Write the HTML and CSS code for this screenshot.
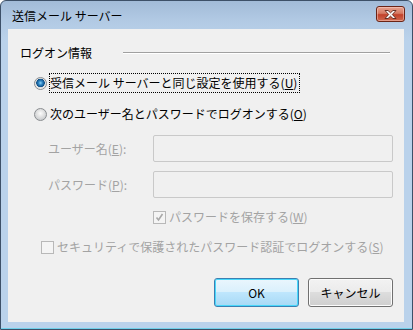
FILE: index.html
```html
<!DOCTYPE html>
<html>
<head>
<meta charset="utf-8">
<title>送信メール サーバー</title>
<link rel="stylesheet" href="styles.css">
</head>
<body>
<div class="window">
  <div class="titlebar">
    <span class="title">送信メール サーバー</span>
    <span class="close">
      <svg width="15" height="11" viewBox="0 0 15 11">
        <path d="M2 1.5 L5 1.5 L7.5 3.8 L10 1.5 L13 1.5 L9.3 5.5 L13 9.5 L10 9.5 L7.5 7.2 L5 9.5 L2 9.5 L5.7 5.5 Z" fill="#fff" stroke="#5a2418" stroke-width="0.9" stroke-linejoin="round"/>
      </svg>
    </span>
  </div>
  <div class="client">
    <div class="group_head">
      <span>ログオン情報</span>
      <span class="rule"></span>
    </div>

    <div class="opt first">
      <span class="radio on"></span>
      <span class="lbl focus">受信メール サーバーと同じ設定を使用する(<u>U</u>)</span>
    </div>
    <div class="opt second">
      <span class="radio"></span>
      <span class="lbl">次のユーザー名とパスワードでログオンする(<u>O</u>)</span>
    </div>

    <div class="field user">
      <span class="field_lbl">ユーザー名(<u>E</u>):</span>
      <span class="txt"></span>
    </div>
    <div class="field pass">
      <span class="field_lbl">パスワード(<u>P</u>):</span>
      <span class="txt"></span>
    </div>

    <div class="chk_row save">
      <span class="chk">
        <svg width="11" height="11" viewBox="0 0 11 11"><path d="M2.5 5.5 L4.5 8 L8.5 2" fill="none" stroke="#a8a8a8" stroke-width="1.6"/></svg>
      </span>
      <span class="lbl dis">パスワードを保存する(<u>W</u>)</span>
    </div>
    <div class="chk_row spa">
      <span class="chk"></span>
      <span class="lbl dis">セキュリティで保護されたパスワード認証でログオンする(<u>S</u>)</span>
    </div>

    <div class="buttons">
      <span class="btn ok">OK</span>
      <span class="btn">キャンセル</span>
    </div>
  </div>
</div>
</body>
</html>
```

FILE: styles.css
```css
body {
margin:0;
background:#fff;
font-family:"Noto Sans CJK JP", "Noto Sans", sans-serif;
font-size:12px;
color:#000;
}

.window {
width:413px;
height:330px;
box-sizing:border-box;
border:1px solid #3d5068;
border-radius:6px 6px 0 0;
background:linear-gradient(#a2bbd8 0px, #b2cae4 20px, #bad2eb 40px, #bad2eb 100%);
box-shadow:inset 0 -1px 0 #6fd0ea;
padding:0 8px 7px 7px;
display:flex;
flex-direction:column;
}

.titlebar {
height:28px;
display:flex;
align-items:center;
justify-content:space-between;
padding:0 0 0 4px;
}

.title {
line-height:16px;
margin-top:1px;
color:#000;
}

.close {
width:27px;
height:14px;
margin-top:-2px;
margin-right:-1px;
border:1px solid #6b2416;
border-radius:3px;
background:linear-gradient(#e7a28f 0%, #d67a63 45%, #c2412a 55%, #cf6a50 100%);
box-shadow:inset 0 0 0 1px rgba(255,220,210,0.45);
display:flex;
align-items:center;
justify-content:center;
}

.close svg { display:block; }

.client {
flex:1;
background:#f0f0f0;
padding:16px 0 0 12px;
display:flex;
flex-direction:column;
}

.group_head {
display:flex;
align-items:center;
line-height:16px;
height:16px;
padding-right:14px;
}

.group_head .rule {
flex:1;
height:1px;
margin-left:31px;
margin-top:-1px;
background:#a0a0a0;
box-shadow:0 1px 0 #fff;
}

.opt {
display:flex;
align-items:center;
height:20px;
margin-left:14px;
}

.opt.first { margin-top:12px; }
.opt.second { margin-top:11px; }

.radio {
width:13px;
height:13px;
box-sizing:border-box;
border-radius:50%;
border:1px solid #8a8d90;
background:radial-gradient(circle at 50% 40%, #fcfcfc 0, #e6e6e6 3px, #cfd1d3 6px);
margin-right:2px;
}

.radio.on {
background:radial-gradient(circle at 50% 45%, #8ed3f7 0, #2f86c4 2px, #0f4f86 4px, #dcdcdc 4.5px, #f3f3f3 6px);
}

.lbl {
line-height:16px;
padding:1px 2px 1px 0;
border:1px solid transparent;
white-space:nowrap;
}

.lbl.focus { border:1px dotted #000; }

.lbl.dis, .field_lbl { color:#a3a3a3; }

.field {
display:flex;
align-items:center;
margin-left:28px;
}

.field.user { margin-top:11px; }
.field.pass { margin-top:9px; }

.field_lbl {
width:105px;
line-height:16px;
white-space:nowrap;
}

.txt {
width:240px;
height:27px;
box-sizing:border-box;
border:1px solid #c9c9c9;
border-radius:2px;
background:#f0f0f0;
}

.chk_row {
display:flex;
align-items:center;
height:16px;
}

.chk_row.save { margin-top:11px; margin-left:133px; }
.chk_row.spa { margin-top:14px; margin-left:21px; }

.chk {
width:13px;
height:13px;
box-sizing:border-box;
border:1px solid #b8b8b8;
background:#f4f4f4;
margin-right:2px;
display:flex;
align-items:center;
justify-content:center;
}

.chk svg { display:block; }

.buttons {
display:flex;
justify-content:flex-end;
gap:9px;
margin-top:23px;
padding-right:11px;
}

.btn {
width:85px;
height:29px;
box-sizing:border-box;
border:1px solid #707070;
border-radius:3px;
background:linear-gradient(#f2f2f2 0%, #ebebeb 50%, #dddddd 50%, #cfcfcf 100%);
box-shadow:inset 0 0 0 1px #fcfcfc;
display:flex;
align-items:center;
justify-content:center;
line-height:16px;
}

.btn.ok {
border-color:#3c7fb1;
background:linear-gradient(#eaf6fd 0%, #d9f0fc 50%, #bee6fd 50%, #a7d9f5 100%);
box-shadow:inset 0 0 0 1px #48d8fb;
}
```
